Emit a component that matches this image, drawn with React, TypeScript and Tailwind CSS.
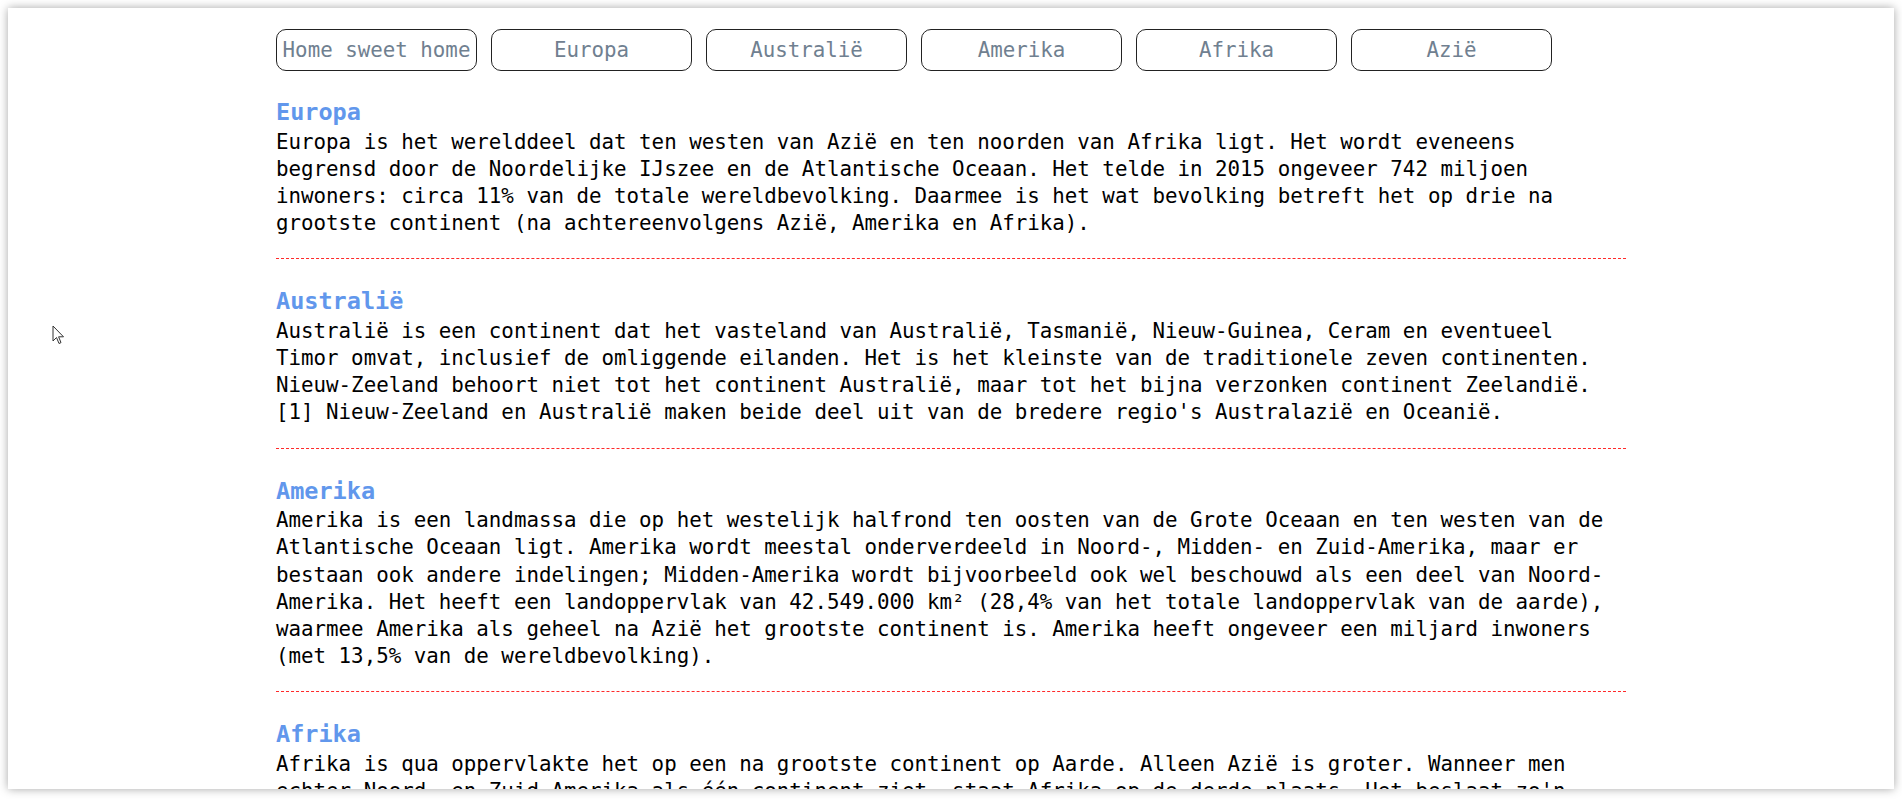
import React from "react";

type CONTINENT = {
  name: string;
  text: string;
};

const continents: CONTINENT[] = [
  {
    name: "Europa",
    text: "Europa is het werelddeel dat ten westen van Azië en ten noorden van Afrika ligt. Het wordt eveneens begrensd door de Noordelijke IJszee en de Atlantische Oceaan. Het telde in 2015 ongeveer 742 miljoen inwoners: circa 11% van de totale wereldbevolking. Daarmee is het wat bevolking betreft het op drie na grootste continent (na achtereenvolgens Azië, Amerika en Afrika).",
  },
  {
    name: "Australië",
    text: "Australië is een continent dat het vasteland van Australië, Tasmanië, Nieuw-Guinea, Ceram en eventueel Timor omvat, inclusief de omliggende eilanden. Het is het kleinste van de traditionele zeven continenten. Nieuw-Zeeland behoort niet tot het continent Australië, maar tot het bijna verzonken continent Zeelandië.[1] Nieuw-Zeeland en Australië maken beide deel uit van de bredere regio's Australazië en Oceanië.",
  },
  {
    name: "Amerika",
    text: "Amerika is een landmassa die op het westelijk halfrond ten oosten van de Grote Oceaan en ten westen van de Atlantische Oceaan ligt. Amerika wordt meestal onderverdeeld in Noord-, Midden- en Zuid-Amerika, maar er bestaan ook andere indelingen; Midden-Amerika wordt bijvoorbeeld ook wel beschouwd als een deel van Noord-Amerika. Het heeft een landoppervlak van 42.549.000 km² (28,4% van het totale landoppervlak van de aarde), waarmee Amerika als geheel na Azië het grootste continent is. Amerika heeft ongeveer een miljard inwoners (met 13,5% van de wereldbevolking).",
  },
  {
    name: "Afrika",
    text: "Afrika is qua oppervlakte het op een na grootste continent op Aarde. Alleen Azië is groter. Wanneer men echter Noord- en Zuid-Amerika als één continent ziet, staat Afrika op de derde plaats. Het beslaat zo'n 30.221.532 km², inclusief de omringende eilanden, dat is 20,3% van het totale landoppervlak op Aarde.",
  },
  {
    name: "Azië",
    text: "Azië is het grootste en meest bevolkte werelddeel. Het beslaat 8,6% van het totale aardoppervlak en 29,4% van het landoppervlak. Met ruim 4,5 miljard inwoners woont er ongeveer 60% van de wereldbevolking.",
  },
];

const App: React.FC = () => {
  return (
    <div className="h-[799px] w-full overflow-hidden bg-white pt-[8px]">
      <div
        className="relative mx-[8px] h-[781px] overflow-hidden bg-white shadow-[0_0_9px_rgba(0,0,0,0.35)]"
        style={{ fontFamily: '"DejaVu Sans Mono", monospace' }}
      >
        <div className="mx-auto w-[1350px] pt-[21px]">
          <nav className="flex gap-[14px]">
            {["Home sweet home", ...continents.map((c) => c.name)].map((label) => (
              <button
                key={label}
                className="h-[42px] w-[201px] rounded-[10px] border border-[#222] bg-white text-center text-[20.8px] leading-none text-[#708090]"
              >
                {label}
              </button>
            ))}
          </nav>
          <div className="mt-[25px]">
            {continents.map((c, index) => (
              <section
                key={c.name}
                className={
                  index === 0
                    ? "border-b border-dashed border-[#ff2a2a] pb-[21px]"
                    : "mt-[26px] border-b border-dashed border-[#ff2a2a] pb-[21px]"
                }
              >
                <h3 className="text-[23.5px] font-bold leading-[32.5px] text-[#6197ec]">
                  {c.name}
                </h3>
                <p className="text-[20.8px] leading-[27.2px] text-black">{c.text}</p>
              </section>
            ))}
          </div>
        </div>
        {/* mouse pointer */}
        <svg
          className="absolute left-[44px] top-[317px]"
          width="13"
          height="20"
          viewBox="0 0 13 20"
        >
          <path
            d="M1 1 L1 16 L4.5 12.5 L7 18.5 L9 17.6 L6.6 11.8 L11.5 11.8 Z"
            fill="white"
            stroke="#333"
            strokeWidth="1"
            strokeLinejoin="round"
          />
        </svg>
      </div>
    </div>
  );
};

export default App;
